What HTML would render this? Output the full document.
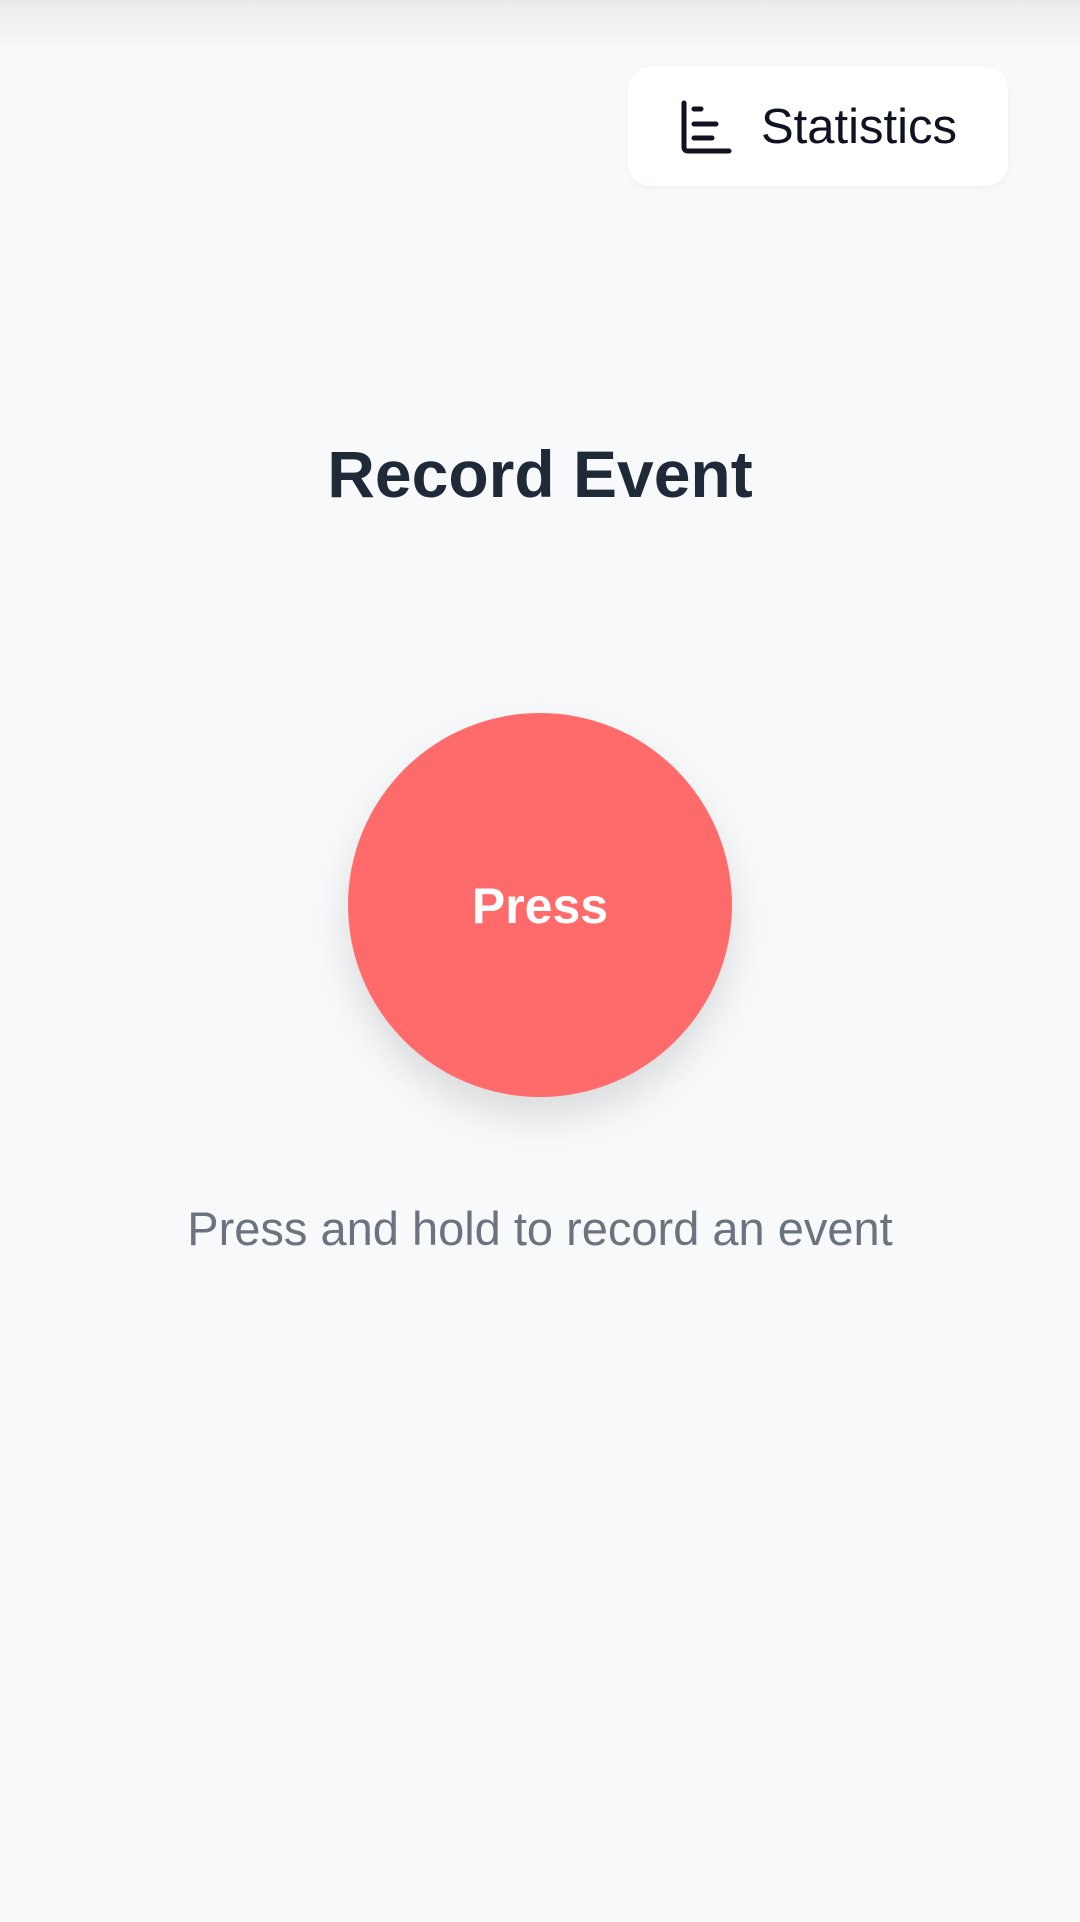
<!DOCTYPE html>
<html><head><meta charset="utf-8"><style>
html,body{margin:0;padding:0;}
body{width:1080px;height:1922px;background:#f8f9fb;position:relative;overflow:hidden;font-family:"Liberation Sans",sans-serif;}
.topsh{position:absolute;left:0;top:0;width:1080px;height:50px;background:linear-gradient(#e9eaec,#f8f9fb);}
.btn{position:absolute;left:628px;top:67px;width:380px;height:119px;background:#fff;border-radius:22px;box-shadow:0 2px 6px rgba(0,0,0,0.04);}
.btxt{position:absolute;left:761px;top:97px;font-size:49px;line-height:60px;color:#0f1222;white-space:nowrap;}
h1{position:absolute;left:0;width:1080px;top:432px;margin:0;text-align:center;font-size:66px;line-height:84px;font-weight:bold;color:#1f2937;}
.circle{position:absolute;left:348px;top:713px;width:384px;height:384px;border-radius:50%;background:#ff6b6b;box-shadow:0 20px 40px rgba(0,0,0,0.12);}
.press{position:absolute;left:0;width:1080px;top:876px;text-align:center;font-size:50px;line-height:60px;font-weight:bold;color:#fff;}
.sub{position:absolute;left:0;width:1080px;top:1199px;text-align:center;font-size:47px;line-height:60px;color:#6b7280;}
</style></head><body>
<div class="topsh"></div>
<div class="btn"></div>
<svg style="position:absolute;left:679px;top:99px" width="56" height="56" viewBox="0 0 56 56">
<path d="M5 4 V48 Q5 52 9 52 H50" fill="none" stroke="#0f1222" stroke-width="5" stroke-linecap="round"/>
<path d="M15 10 H22 M15 25 H37 M15 39 H33" fill="none" stroke="#0f1222" stroke-width="5" stroke-linecap="round"/>
</svg>
<div class="btxt">Statistics</div>
<h1>Record Event</h1>
<div class="circle"></div>
<div class="press">Press</div>
<div class="sub">Press and hold to record an event</div>
</body></html>
